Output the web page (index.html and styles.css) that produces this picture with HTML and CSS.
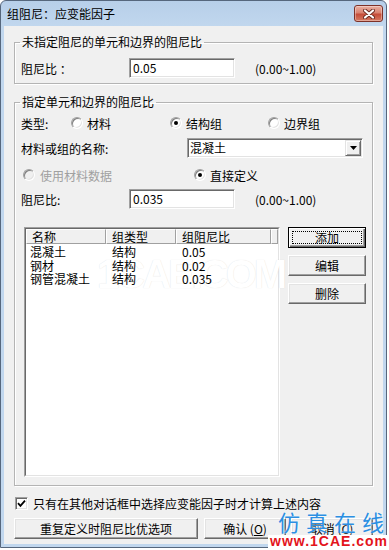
FILE: index.html
```html
<!DOCTYPE html>
<html lang="zh-CN">
<head>
<meta charset="utf-8">
<title>组阻尼：应变能因子</title>
<link rel="stylesheet" href="styles.css">
</head>
<body>
<div class="window">
  <div class="titlebar">
    <span class="title">组阻尼：应变能因子</span>
    <span class="close">
      <svg width="12" height="10" viewBox="0 0 12 10">
        <path d="M2 1.5 L10 8.5 M10 1.5 L2 8.5" stroke="#6a2a20" stroke-width="4" stroke-linecap="round"/>
        <path d="M2 1.5 L10 8.5 M10 1.5 L2 8.5" stroke="#ffffff" stroke-width="2.2" stroke-linecap="round"/>
      </svg>
    </span>
  </div>
  <div class="client">
    <fieldset class="group g1">
      <legend>未指定阻尼的单元和边界的阻尼比</legend>
      <div class="row">
        <span class="lbl">阻尼比 ：</span>
        <span class="edit">0.05</span>
        <span class="range">(0.00~1.00)</span>
      </div>
    </fieldset>

    <fieldset class="group g2">
      <legend>指定单元和边界的阻尼比</legend>
      <div class="row r1">
        <span class="lbl-type">类型:</span>
        <span class="opt w99"><span class="radio"></span>材料</span>
        <span class="opt w98"><span class="radio on"></span>结构组</span>
        <span class="opt"><span class="radio"></span>边界组</span>
      </div>
      <div class="row r2">
        <span class="lbl-name">材料或组的名称:</span>
        <span class="combo">
          <span class="combo-text">混凝土</span>
          <span class="combo-btn">
            <svg width="7" height="4" viewBox="0 0 7 4"><path d="M0 0 H7 L3.5 4 Z" fill="#000"/></svg>
          </span>
        </span>
      </div>
      <div class="row r3">
        <span class="opt w173 disabled"><span class="radio dis"></span>使用材料数据</span>
        <span class="opt"><span class="radio on"></span>直接定义</span>
      </div>
      <div class="row r4">
        <span class="lbl">阻尼比:</span>
        <span class="edit">0.035</span>
        <span class="range">(0.00~1.00)</span>
      </div>
      <div class="listarea">
        <div class="list">
          <div class="list-inner">
            <div class="lh">
              <span class="c1">名称</span>
              <span class="c2">组类型</span>
              <span class="c3">组阻尼比</span>
              <span class="c4"></span>
            </div>
            <div class="lr"><span class="c1">混凝土</span><span class="c2">结构</span><span class="c3">0.05</span></div>
            <div class="lr"><span class="c1">钢材</span><span class="c2">结构</span><span class="c3">0.02</span></div>
            <div class="lr"><span class="c1">钢管混凝土</span><span class="c2">结构</span><span class="c3">0.035</span></div>
            <div class="wm-faint">1CAE.COM</div>
          </div>
        </div>
        <div class="side">
          <span class="btn default"><span class="focus">添加</span></span>
          <span class="btn">编辑</span>
          <span class="btn">删除</span>
        </div>
      </div>
    </fieldset>

    <div class="checkrow">
      <span class="check">
        <svg width="9" height="9" viewBox="0 0 9 9"><path d="M1 4.2 L3.4 6.8 L8 1.6" fill="none" stroke="#000" stroke-width="1.8"/></svg>
      </span>
      <span>只有在其他对话框中选择应变能因子时才计算上述内容</span>
    </div>

    <div class="btnrow">
      <span class="btn b-wide">重复定义时阻尼比优选项</span>
      <span class="btn b-ok">确认 (<u>O</u>)</span>
      <span class="btn b-cancel">取消 (<u>C</u>)</span>
    </div>
  </div>
</div>

<div class="wm-cn">仿真在线</div>
<div class="wm-url">www.1CAE.com</div>
</body>
</html>
```

FILE: styles.css
```css
* { box-sizing: border-box; }

html, body {
  margin: 0;
  padding: 0;
}

body {
  width: 389px;
  height: 550px;
  position: relative;
  overflow: hidden;
  background: #ffffff;
  font-family: "Noto Sans CJK SC", "Noto Sans", sans-serif;
  font-size: 12px;
  color: #000;
}

.window {
  width: 387px;
  height: 548px;
  border: 1px solid #56677d;
  border-radius: 6px 6px 0 0;
  background: linear-gradient(#b7cfe9, #c1d7ee 26px, #c1d7ee);
  padding: 0 3px 3px;
  display: flex;
  flex-direction: column;
}

.titlebar {
  height: 25px;
  flex: none;
  display: flex;
  align-items: flex-start;
  padding-left: 3px;
}

.title {
  line-height: 25px;
  font-size: 12px;
}

.close {
  margin-left: auto;
  margin-top: 4px;
  width: 29px;
  height: 17px;
  border: 1px solid #7d3128;
  border-radius: 3px;
  background: linear-gradient(#eab0a2, #d98371 45%, #c54d39 55%, #d57a62);
  box-shadow: inset 0 0 0 1px rgba(255, 255, 255, 0.35);
  display: flex;
  align-items: center;
  justify-content: center;
}

.client {
  flex: 1;
  background: #f0f0f0;
  padding: 9px 0 0 10px;
  display: flex;
  flex-direction: column;
}

.group {
  margin: 0;
  width: 359px;
  min-width: 0;
  border: 1px solid #b4b4b4;
  box-shadow: inset 1px 1px #ffffff, 1px 1px #ffffff;
  padding: 9px 6px 5px;
}

.group legend {
  margin-left: -1px;
  padding: 0 2px;
  line-height: 14px;
  font-size: 12px;
}

.g1 { margin-bottom: 11px; }

.g2 { padding-top: 4px; padding-bottom: 8px; }

.row {
  display: flex;
  align-items: center;
  height: 20px;
}

.r2 { margin-top: 5px; }
.r3 { margin-top: 7px; }
.r4 { margin-top: 4px; }

.lbl { width: 108px; }
.lbl-type { width: 50px; }
.lbl-name { width: 166px; }

.edit {
  width: 106px;
  height: 20px;
  background: #fff;
  border: 1px solid;
  border-color: #a0a0a0 #ffffff #ffffff #a0a0a0;
  box-shadow: inset 1px 1px #696969, inset -1px -1px #e3e3e3;
  padding-left: 3px;
  line-height: 18px;
}

.range { margin-left: 20px; }

.opt {
  display: flex;
  align-items: center;
  gap: 4px;
}
.w99 { width: 99px; }
.w98 { width: 98px; }
.w173 { width: 173px; }

.radio {
  width: 12px;
  height: 12px;
  border-radius: 50%;
  background: #fff;
  border: 1px solid;
  border-color: #a0a0a0 #ffffff #ffffff #a0a0a0;
  box-shadow: inset 1px 1px #808080, inset -1px -1px #e3e3e3;
  display: flex;
  align-items: center;
  justify-content: center;
  flex: none;
}

.radio.on::after {
  content: "";
  width: 4px;
  height: 4px;
  border-radius: 50%;
  background: #000;
}

.radio.dis { background: #f0f0f0; }

.disabled { color: #a0a0a0; gap: 5px; }
.disabled .radio { margin-left: 2px; }

.combo {
  width: 176px;
  height: 20px;
  background: #fff;
  border: 1px solid;
  border-color: #a0a0a0 #ffffff #ffffff #a0a0a0;
  box-shadow: inset 1px 1px #696969, inset -1px -1px #e3e3e3;
  padding: 1px;
  display: flex;
  align-items: center;
}

.combo-text {
  flex: 1;
  padding-left: 1px;
  line-height: 16px;
}

.combo-btn {
  width: 16px;
  height: 16px;
  background: #f0f0f0;
  border: 1px solid;
  border-color: #e3e3e3 #696969 #696969 #e3e3e3;
  box-shadow: inset 1px 1px #ffffff, inset -1px -1px #a0a0a0;
  display: flex;
  align-items: center;
  justify-content: center;
}

.listarea {
  display: flex;
  margin-top: 18px;
  height: 250px;
}

.list {
  margin-left: 3px;
  width: 256px;
  height: 250px;
  border: 1px solid;
  border-color: #a0a0a0 #ffffff #ffffff #a0a0a0;
}

.list-inner {
  position: relative;
  height: 100%;
  background: #fff;
  border: 1px solid;
  border-color: #696969 #e3e3e3 #e3e3e3 #696969;
}

.lh {
  display: flex;
  height: 15px;
  position: relative;
  z-index: 1;
}

.lh span {
  background: #f0f0f0;
  border: 1px solid;
  border-color: #ffffff #a0a0a0 #a0a0a0 #ffffff;
  line-height: 13px;
  padding-left: 5px;
}

.c1 { width: 80px; }
.c2 { width: 70px; }
.c3 { width: 95px; }
.lh .c4 { flex: 1; padding: 0; }

.lr {
  display: flex;
  line-height: 13.5px;
  position: relative;
  z-index: 1;
}
.lh + .lr { margin-top: 1px; }

.lr .c1 { padding-left: 4px; }
.lr .c2, .lr .c3 { padding-left: 6px; }

.wm-faint {
  position: absolute;
  left: 71px;
  top: 25px;
  white-space: nowrap;
  font-family: "Liberation Sans", sans-serif;
  font-weight: bold;
  font-size: 40px;
  line-height: 40px;
  letter-spacing: -3px;
  color: #ffffff;
  text-shadow: 0 0 1px rgba(0, 0, 0, 0.14);
}

.side {
  margin-left: 8px;
  width: 78px;
  display: flex;
  flex-direction: column;
  gap: 7px;
}

.btn {
  height: 21px;
  background: #f0f0f0;
  border: 1px solid;
  border-color: #ffffff #696969 #696969 #ffffff;
  box-shadow: inset -1px -1px #a0a0a0, inset 1px 1px #e3e3e3;
  display: flex;
  align-items: center;
  justify-content: center;
  line-height: 14px;
  white-space: nowrap;
}

.btn.default {
  border-color: #000;
  box-shadow: inset 1px 1px #ffffff, inset -1px -1px #696969, inset -2px -2px #a0a0a0;
}

.focus {
  width: calc(100% - 6px);
  height: calc(100% - 6px);
  border: 1px dotted #000;
  display: flex;
  align-items: center;
  justify-content: center;
}

.checkrow {
  margin-top: 11px;
  height: 13px;
  display: flex;
  align-items: center;
  gap: 5px;
  padding-left: 1px;
}

.check {
  width: 13px;
  height: 13px;
  background: #fff;
  border: 1px solid;
  border-color: #a0a0a0 #ffffff #ffffff #a0a0a0;
  box-shadow: inset 1px 1px #696969, inset -1px -1px #e3e3e3;
  display: flex;
  align-items: center;
  justify-content: center;
}

.btnrow {
  margin-top: 8px;
  display: flex;
}

.b-wide { width: 184px; }
.b-ok { width: 82px; margin-left: 6px; }
.b-cancel { width: 82px; margin-left: 5px; }

u { text-decoration: underline; }

.wm-cn {
  position: absolute;
  left: 278px;
  top: 509px;
  white-space: nowrap;
  font-size: 22px;
  line-height: 24px;
  letter-spacing: 6px;
  color: #2c8fe2;
  text-shadow: 0 0 2px #ffffff;
}

.wm-url {
  position: absolute;
  left: 268px;
  right: 0;
  top: 535px;
  height: 13px;
  white-space: nowrap;
  background: #ffffff;
  font-family: "Liberation Sans", sans-serif;
  font-weight: bold;
  font-size: 14px;
  line-height: 13px;
  letter-spacing: 1px;
  color: #e3141c;
  padding-left: 2px;
}
```
